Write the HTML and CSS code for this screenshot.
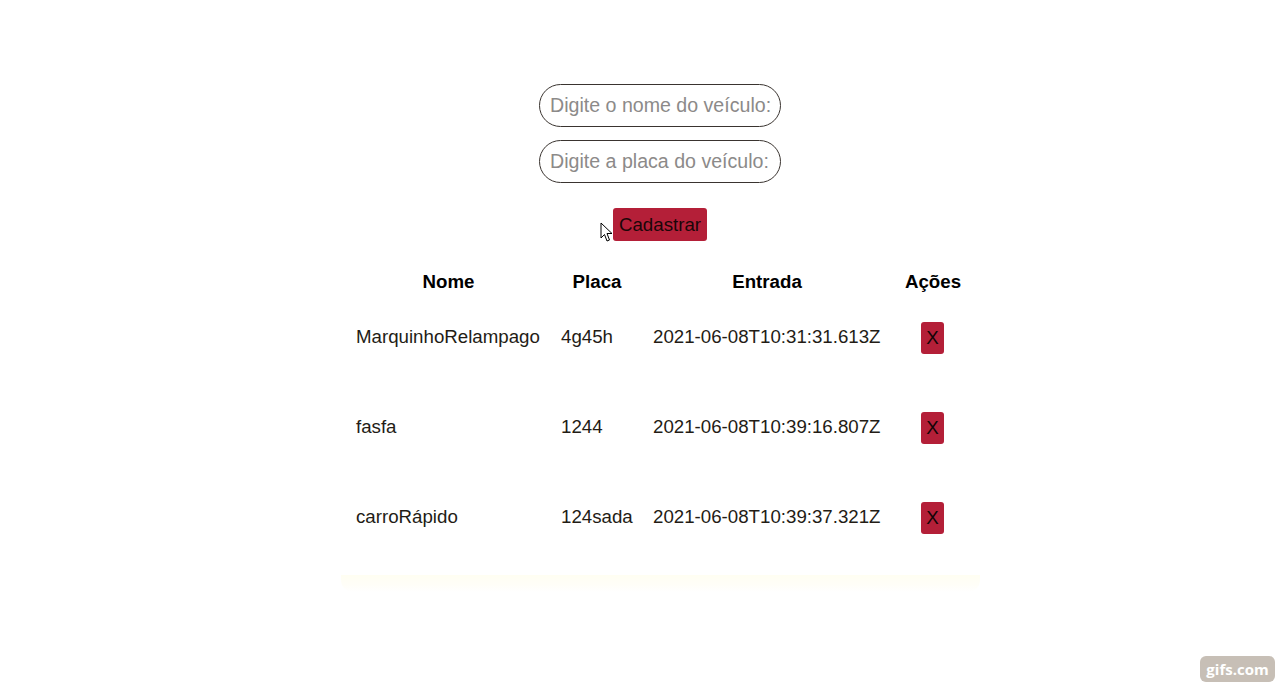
FILE: index.html
```html
<!DOCTYPE html>
<html lang="pt-BR">
<head>
<meta charset="utf-8">
<title>Estacionamento</title>
<link rel="stylesheet" href="styles.css">
</head>
<body>
<main class="page">
  <form class="form">
    <input class="field" type="text" placeholder="Digite o nome do veículo:">
    <input class="field" type="text" placeholder="Digite a placa do veículo:">
    <div class="btn-wrap">
      <button class="btn" type="button">Cadastrar</button>
      <svg class="cursor" width="14" height="21" viewBox="0 0 14 21"><path d="M1 1 L1 16 L4.5 12.5 L7 19 L9.5 18 L7 11.5 L12 11.5 Z" fill="#fff" stroke="#000" stroke-width="1" stroke-linejoin="round"/></svg>
    </div>
  </form>
  <div class="table-wrap">
    <table class="table">
      <colgroup><col class="c1"><col class="c2"><col class="c3"><col class="c4"></colgroup>
      <thead>
        <tr><th>Nome</th><th>Placa</th><th>Entrada</th><th>Ações</th></tr>
      </thead>
      <tbody>
        <tr><td>MarquinhoRelampago</td><td>4g45h</td><td>2021-06-08T10:31:31.613Z</td><td><button class="del" type="button">X</button></td></tr>
        <tr><td>fasfa</td><td>1244</td><td>2021-06-08T10:39:16.807Z</td><td><button class="del" type="button">X</button></td></tr>
        <tr><td>carroRápido</td><td>124sada</td><td>2021-06-08T10:39:37.321Z</td><td><button class="del" type="button">X</button></td></tr>
      </tbody>
    </table>
    <div class="glow"></div>
  </div>
</main>
<div class="badge">gifs.com</div>
</body>
</html>
```
FILE: styles.css
```css
html, body {
  margin: 0;
  padding: 0;
  background: #fff;
  height: 100%;
}
body {
  font-family: "Liberation Sans", Arial, sans-serif;
  color: #1e1a16;
  overflow: hidden;
}
.page {
  display: flex;
  flex-direction: column;
  align-items: center;
  padding-top: 84px;
  padding-left: 40px;
}
.form {
  display: flex;
  flex-direction: column;
  align-items: center;
  gap: 13px;
}
.field {
  box-sizing: border-box;
  width: 242px;
  height: 43px;
  border: 1px solid #3a3430;
  border-radius: 22px;
  padding: 0 1px 0 10px;
  font-family: "Liberation Sans", Arial, sans-serif;
  font-size: 19.6px;
  color: #222;
  background: #fff;
  outline: none;
}
.field::placeholder {
  color: #8c8a89;
}
.btn-wrap {
  position: relative;
  margin-top: 12px;
}
.btn {
  box-sizing: border-box;
  height: 33px;
  padding: 0 6px;
  border: none;
  border-radius: 3px;
  background: #b41f38;
  color: #1a0608;
  font-family: "Liberation Sans", Arial, sans-serif;
  font-size: 18.7px;
  line-height: 33px;
}
.cursor {
  position: absolute;
  left: -13px;
  top: 14px;
}
.table-wrap {
  position: relative;
  margin-top: 20px;
  margin-left: 1px;
}
.table {
  border-collapse: collapse;
  table-layout: fixed;
  width: 629px;
  font-size: 18.7px;
}
.c1 { width: 205px; }
.c2 { width: 92px; }
.c3 { width: 248px; }
.c4 { width: 84px; }
.table th {
  height: 40px;
  box-sizing: border-box;
  padding: 2px 10px 0;
  font-weight: bold;
  color: #000;
  text-align: center;
  vertical-align: middle;
}
.table td {
  height: 90px;
  box-sizing: border-box;
  padding: 25px 10px 0;
  vertical-align: top;
  white-space: nowrap;
  color: #231c15;
}
.table td:last-child {
  padding: 21px 0 0 30px;
}
.del {
  box-sizing: border-box;
  width: 23px;
  height: 32px;
  padding: 0;
  border: none;
  border-radius: 3px;
  background: #b41f38;
  color: #120406;
  font-family: "Liberation Sans", Arial, sans-serif;
  font-size: 18.7px;
}
.glow {
  height: 17px;
  margin: 4px -5px 0;
  background: linear-gradient(#fffef2, #fffef8 60%, rgba(255,255,255,0));
  border-radius: 0 0 12px 12px;
}
.badge {
  position: absolute;
  left: 1200px;
  top: 656px;
  width: 75px;
  height: 26px;
  border-radius: 6px;
  background: #c7bfb6;
  color: #fff;
  font-family: "Open Sans", "Liberation Sans", sans-serif;
  font-weight: bold;
  font-size: 15px;
  line-height: 26px;
  text-align: center;
}
```
